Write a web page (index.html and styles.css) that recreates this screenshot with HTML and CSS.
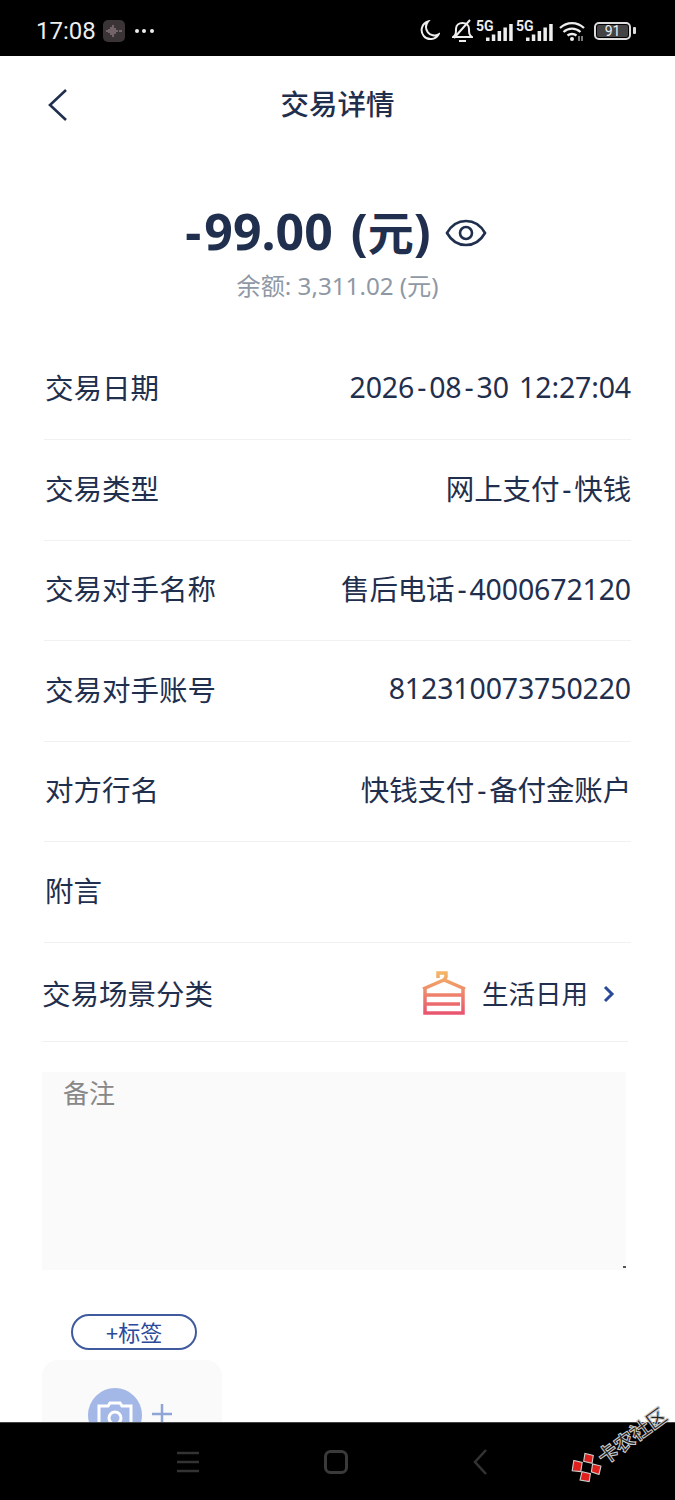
FILE: index.html
```html
<!DOCTYPE html>
<html lang="zh-CN">
  <head>
    <meta charset="UTF-8" />
    <meta name="viewport" content="width=device-width, initial-scale=1.0" />
    <title>交易详情</title>
    <link rel="stylesheet" href="styles.css">
  </head>
  <body>
    <div class="status-bar">
      <span class="clock">17:08</span>
      <svg class="rec-icon" width="22" height="22" viewBox="0 0 22 22">
        <rect width="22" height="22" rx="5" fill="#3a3436" />
        <path d="M3 11h2M6 9v4M8 7v8M10 5v12M12 8v6M14 10v2M16 11h3" stroke="#a8929a" stroke-width="1" />
      </svg>
      <span class="dots"><i></i><i></i><i></i></span>
      <span class="status-right">
        <svg class="moon" width="20" height="21" viewBox="0 0 20 21">
          <path d="M8 1.500a9 9 0 1 0 10.500 13a8.500 8.500 0 0 1 -10.500 -13z" fill="none" stroke="#eee" stroke-width="2" />
        </svg>
        <svg class="bell" width="21" height="24" viewBox="0 0 21 24">
          <path d="M1 18c3-2 3-4 3-8c0-4 3-6 6.500-6c3.500 0 6.500 2 6.500 6c0 4 0 6 3 8zM7 22h7M2 19L18 1" fill="none" stroke="#eee" stroke-width="2" />
        </svg>
        <span class="signal">
          <b>5G</b>
          <svg width="27" height="17" viewBox="0 0 27 17"><path d="M0 13.500h3.500v3.500h-3.500zM5.800 10.500h3.500v6.500h-3.500zM11.600 7h3.500v10h-3.500zM17.400 3.500h3.500v13.500h-3.500zM23.200 0h3.500v17h-3.500z" fill="#eee" /></svg>
        </span>
        <span class="signal">
          <b>5G</b>
          <svg width="27" height="17" viewBox="0 0 27 17"><path d="M0 13.500h3.500v3.500h-3.500zM5.800 10.500h3.500v6.500h-3.500zM11.600 7h3.500v10h-3.500zM17.400 3.500h3.500v13.500h-3.500zM23.200 0h3.500v17h-3.500z" fill="#eee" /></svg>
        </span>
        <svg class="wifi" width="26" height="20" viewBox="0 0 26 20">
          <path d="M1 7c7-6.500 17-6.500 24 0M4.500 11c5-4.500 12-4.500 17 0M8.500 14.500c2.500-2 6.500-2 9 0" fill="none" stroke="#eee" stroke-width="2.300" />
          <circle cx="13" cy="18" r="2" fill="#eee" />
          <path d="M20 15v5M23 15v5" stroke="#bbb" stroke-width="1.300" />
        </svg>
        <span class="battery"><span class="battery-level">91</span></span>
        <span class="battery-tip"></span>
      </span>
    </div>

    <main class="content">
      <header class="title-bar">
        <svg class="back" width="22" height="34" viewBox="0 0 22 34">
          <path d="M19 2L3 17l16 15" fill="none" stroke="#1f2f4d" stroke-width="2.600" />
        </svg>
        <h1>交易详情</h1>
      </header>

      <section class="summary">
        <div class="amount-line">
          <span class="amount"><span class="sep">-</span>99.00 (<span class="yuan">元</span>)</span>
          <svg class="eye" width="42" height="30" viewBox="0 0 42 30">
            <path d="M2 15C11 -1 31 -1 40 15C31 31 11 31 2 15z" fill="none" stroke="#1f2f4d" stroke-width="2.600" />
            <circle cx="21" cy="15" r="6" fill="none" stroke="#1f2f4d" stroke-width="2.600" />
          </svg>
        </div>
        <div class="balance">余额: 3,311.02 (元)</div>
      </section>

      <section class="details">
        <div class="row"><span>交易日期</span><span class="val">2026<span class="sep">-</span>08<span class="sep">-</span>30 12:27:04</span></div>
        <div class="row"><span>交易类型</span><span class="val">网上支付<span class="sep">-</span>快钱</span></div>
        <div class="row"><span>交易对手名称</span><span class="val">售后电话<span class="sep">-</span>4000672120</span></div>
        <div class="row"><span>交易对手账号</span><span class="val">812310073750220</span></div>
        <div class="row"><span>对方行名</span><span class="val">快钱支付<span class="sep">-</span>备付金账户</span></div>
        <div class="row"><span>附言</span><span class="val"></span></div>
      </section>

      <div class="scene">
        <span>交易场景分类</span>
        <span class="scene-value">
          <svg width="48" height="46" viewBox="0 0 48 46">
            <defs>
              <linearGradient id="hanger" x1="0" y1="0" x2="0" y2="1">
                <stop offset="0" stop-color="#f3b566" />
                <stop offset="1" stop-color="#e9556f" />
              </linearGradient>
            </defs>
            <path d="M18 9V4h8v4l-2 3M3 20L24 11l21 9M5 19v25h38V19M5 26h38M5 35h35" fill="none" stroke="url(#hanger)" stroke-width="3.500" />
          </svg>
          <span class="scene-name">生活日用</span>
          <svg class="scene-arrow" width="12" height="18" viewBox="0 0 12 18">
            <path d="M2 2l7 7-7 7" fill="none" stroke="#2b4a9b" stroke-width="3" />
          </svg>
        </span>
      </div>

      <div class="note">备注<i class="note-dot"></i></div>

      <button type="button" class="tag-button">+标签</button>

      <div class="upload">
        <span class="camera">
          <svg width="36" height="32" viewBox="0 0 36 32">
            <path d="M2 5h9l2-3h10l2 3h9v26H2z" fill="none" stroke="#fff" stroke-width="3" />
            <circle cx="18" cy="17" r="6" fill="none" stroke="#fff" stroke-width="3" />
          </svg>
        </span>
        <svg class="upload-plus" width="22" height="22" viewBox="0 0 22 22">
          <path d="M1 11h20M11 1v20" stroke="#8ea5d8" stroke-width="2.500" />
        </svg>
      </div>
    </main>

    <nav class="nav-bar">
      <svg width="22" height="22" viewBox="0 0 22 22">
        <path d="M0 2h22M0 11h22M0 20h22" stroke="#333" stroke-width="2.500" />
      </svg>
      <svg width="24" height="24" viewBox="0 0 24 24">
        <rect x="1.500" y="1.500" width="21" height="21" rx="5" fill="none" stroke="#3a3a3a" stroke-width="3" />
      </svg>
      <svg width="14" height="26" viewBox="0 0 14 26">
        <path d="M13 1L2 13l11 12" fill="none" stroke="#333" stroke-width="2.500" />
      </svg>
    </nav>

    <div class="watermark">
      <svg width="28" height="28" viewBox="0 0 30 30">
        <path d="M1 9L9 1l6 7-7 7zM17 8l6-6 6 7-6 6zM2 22l7-6 6 7-6 6zM17 22l6-6 6 7-7 6z" fill="#e0201c" stroke="#ccc" stroke-width="1.200" />
      </svg>
      <span>卡农社区</span>
    </div>
  </body>
</html>
```

FILE: styles.css
```css
* {
  box-sizing: border-box;
}
html,
body {
  margin: 0;
  height: 1500px;
  overflow: hidden;
}
body {
  display: flex;
  flex-direction: column;
  position: relative;
  background: #fff;
  color: #1f2f4d;
  font-family: "Noto Sans", "Noto Sans CJK SC", sans-serif;
}

/* status bar */
.status-bar {
  height: 56px;
  flex: none;
  display: flex;
  align-items: center;
  padding: 5px 39px 0 36px;
  background: #000;
  color: #eee;
}
.clock {
  font-family: Roboto, sans-serif;
  font-size: 24px;
  margin-right: 7px;
}
.rec-icon {
  margin-right: 10px;
}
.dots {
  display: flex;
  gap: 3.500px;
}
.dots i {
  width: 4px;
  height: 4px;
  border-radius: 50%;
  background: #eee;
}
.status-right {
  margin-left: auto;
  display: flex;
  align-items: center;
}
.bell {
  margin-left: 12px;
}
.signal {
  display: flex;
  align-items: flex-end;
  justify-content: flex-end;
  position: relative;
  width: 37px;
  height: 20px;
  margin-left: 3px;
}
.signal b {
  position: absolute;
  left: 0;
  top: -3px;
  font-family: Roboto, sans-serif;
  font-size: 14px;
}
.wifi {
  margin-left: 6px;
}
.battery {
  width: 37px;
  height: 18px;
  margin-left: 9px;
  border: 2px solid #ddd;
  border-radius: 5px;
  padding: 1px;
  display: flex;
}
.battery-level {
  flex: 1;
  background: #444;
  border-radius: 2px;
  color: #eee;
  font-family: Roboto, sans-serif;
  font-size: 14px;
  line-height: 12px;
  text-align: center;
}
.battery-tip {
  width: 3px;
  height: 7px;
  margin-left: 2px;
  background: #ddd;
  border-radius: 1px;
}

/* page */
.content {
  flex: 1;
  min-height: 0;
  overflow: hidden;
}
.title-bar {
  height: 96px;
  padding-bottom: 4px;
  display: flex;
  align-items: center;
  justify-content: center;
  position: relative;
}
.title-bar h1 {
  margin: 0;
  font-size: 28.500px;
  font-weight: 500;
}
.back {
  position: absolute;
  left: 47px;
  top: 32px;
}
.sep {
  margin: 0 3px;
}
.summary {
  text-align: center;
  padding-top: 46.500px;
}
.amount-line {
  height: 66px;
  padding-right: 6px;
  display: flex;
  align-items: center;
  justify-content: center;
  gap: 14px;
}
.amount {
  font-size: 50px;
  font-weight: 700;
  line-height: 66px;
  word-spacing: 5px;
}
.yuan {
  font-size: 46px;
}
.eye {
  margin-top: 2px;
}
.balance {
  margin-top: 5.500px;
  font-size: 24.200px;
  line-height: 32px;
  color: #8f98a5;
}
.details {
  margin: 37.500px 44px 0 44px;
}
.row {
  height: 100.500px;
  padding: 0 0 5px 1px;
  display: flex;
  align-items: center;
  justify-content: space-between;
  border-bottom: 1px solid #f1f1f3;
  font-size: 28.500px;
}
.val {
  letter-spacing: -0.150px;
  word-spacing: 3px;
}
.scene {
  height: 99px;
  padding-top: 1px;
  margin: 0 47px 0 42px;
  display: flex;
  align-items: center;
  justify-content: space-between;
  border-bottom: 1px solid #f1f1f3;
  font-size: 28.500px;
}
.scene-value {
  display: flex;
  align-items: center;
  margin-right: 13px;
}
.scene-name {
  margin: 0 15px 0 14px;
  font-size: 26.500px;
}
.scene-arrow {
  margin-top: 3px;
}
.note {
  position: relative;
  height: 198px;
  margin: 30px 49px 0 42px;
  padding: 1px 21px;
  background: #fafafa;
  color: #888;
  font-size: 26px;
}
.note-dot {
  position: absolute;
  right: 0;
  bottom: 2px;
  width: 3px;
  height: 2px;
  background: #555;
}
.tag-button {
  display: block;
  width: 126px;
  height: 36px;
  margin: 44px 0 0 71px;
  padding: 0;
  background: #fff;
  border: 2px solid #3f5a9e;
  border-radius: 18px;
  color: #2b4a9b;
  font-family: "Noto Sans", "Noto Sans CJK SC", sans-serif;
  font-size: 22px;
  line-height: 30px;
}
.upload {
  width: 180px;
  height: 180px;
  margin: 10px 0 0 42px;
  padding: 28px 0 0 46px;
  display: flex;
  align-items: flex-start;
  gap: 9px;
  background: #fafafa;
  border-radius: 16px;
}
.camera {
  width: 54px;
  height: 54px;
  padding-top: 13px;
  display: flex;
  align-items: flex-start;
  justify-content: center;
  background: #a3b8e6;
  border-radius: 50%;
}
.upload-plus {
  margin-top: 15px;
}

/* bottom nav */
.nav-bar {
  height: 78px;
  flex: none;
  display: flex;
  align-items: center;
  justify-content: space-between;
  padding: 0 188px 0 177px;
  background: #000;
  border-top: 1px solid #444;
}

.watermark {
  position: absolute;
  left: 564px;
  top: 1425px;
  width: 112px;
  height: 36px;
  display: flex;
  align-items: center;
  transform: rotate(-36deg);
  gap: 2px;
  font-size: 20px;
  font-weight: 700;
  color: #222;
  -webkit-text-stroke: 1px #ccc;
  white-space: nowrap;
}
.watermark svg {
  flex: none;
}
```
